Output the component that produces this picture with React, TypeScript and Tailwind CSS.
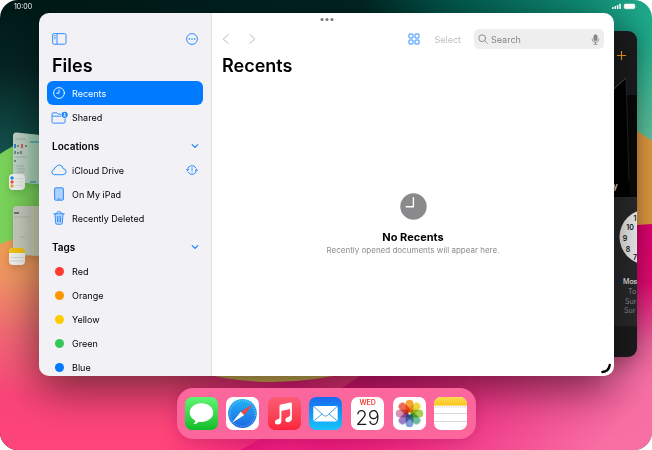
import type { ReactNode } from "react";

const tags = [
  { name: "Red", color: "bg-[#ff3b30]" },
  { name: "Orange", color: "bg-[#ff9500]" },
  { name: "Yellow", color: "bg-[#ffcc00]" },
  { name: "Green", color: "bg-[#34c759]" },
  { name: "Blue", color: "bg-[#007aff]" },
];

const petals = [
  { angle: 0, color: "#f8a23a" },
  { angle: 45, color: "#ecd83a" },
  { angle: 90, color: "#a9cf4f" },
  { angle: 135, color: "#6cbd9b" },
  { angle: 180, color: "#7a9fd8" },
  { angle: 225, color: "#9a7fc4" },
  { angle: 270, color: "#d890b4" },
  { angle: 315, color: "#ee6a52" },
];

function Wallpaper() {
  return (
    <svg className="absolute inset-0 w-full h-full" viewBox="0 0 652 450" preserveAspectRatio="none" aria-hidden="true">
      <defs>
        <linearGradient id="teal" x1="0" y1="0" x2="1" y2="0">
          <stop offset="0" stopColor="#001817" />
          <stop offset="0.55" stopColor="#002522" />
          <stop offset="0.7" stopColor="#025a4e" />
          <stop offset="0.88" stopColor="#0e8b74" />
          <stop offset="1" stopColor="#1fab8b" />
        </linearGradient>
        <linearGradient id="tealDown" x1="0" y1="0" x2="0" y2="1">
          <stop offset="0" stopColor="#1f6f68" stopOpacity="0" />
          <stop offset="0.4" stopColor="#1f6f68" stopOpacity="0.15" />
          <stop offset="1" stopColor="#1f6f68" stopOpacity="0.8" />
        </linearGradient>
        <linearGradient id="mint" x1="0" y1="0" x2="0" y2="1">
          <stop offset="0" stopColor="#66c09b" stopOpacity="0" />
          <stop offset="1" stopColor="#66c09b" />
        </linearGradient>
        <linearGradient id="warm" x1="0" y1="235" x2="0" y2="450" gradientUnits="userSpaceOnUse">
          <stop offset="0" stopColor="#f0a050" />
          <stop offset="0.2" stopColor="#f29664" />
          <stop offset="0.45" stopColor="#f26a74" />
          <stop offset="0.75" stopColor="#fa4579" />
          <stop offset="1" stopColor="#ff4579" />
        </linearGradient>
        <linearGradient id="magenta" x1="360" y1="260" x2="600" y2="450" gradientUnits="userSpaceOnUse">
          <stop offset="0" stopColor="#d5006c" />
          <stop offset="0.5" stopColor="#ee2a80" />
          <stop offset="1" stopColor="#f86fa4" />
        </linearGradient>
        <linearGradient id="magentaRight" x1="0" y1="220" x2="0" y2="400" gradientUnits="userSpaceOnUse">
          <stop offset="0" stopColor="#d8006a" />
          <stop offset="0.35" stopColor="#dc0b70" />
          <stop offset="0.7" stopColor="#e8629a" />
          <stop offset="1" stopColor="#f37aaa" stopOpacity="0" />
        </linearGradient>
        <linearGradient id="bottomGlow" x1="160" y1="0" x2="380" y2="0" gradientUnits="userSpaceOnUse">
          <stop offset="0" stopColor="#ec1c7c" stopOpacity="0" />
          <stop offset="0.6" stopColor="#ec1c7c" />
          <stop offset="1" stopColor="#ec1c7c" stopOpacity="0" />
        </linearGradient>
      </defs>
      <rect width="652" height="450" fill="url(#teal)" />
      <rect width="300" height="170" fill="url(#tealDown)" />
      <rect x="500" y="40" width="152" height="110" fill="url(#mint)" />
      <path d="M0 154Q20 140 60 128V300H0Z" fill="#7bd65c" />
      <path d="M600 110Q630 125 652 141V260H600Z" fill="#dc963e" />
      <path d="M0 244Q30 232 70 222H420V450H0Z" fill="url(#warm)" />
      <path d="M240 450C320 410 450 300 652 224V450Z" fill="url(#magenta)" />
      <path d="M600 228Q630 225 652 224V400H600Z" fill="url(#magentaRight)" />
      <rect x="160" y="376" width="220" height="74" fill="url(#bottomGlow)" />
      <path d="M190 370Q270 394 360 370Z" fill="#d8b858" />
    </svg>
  );
}

function StatusBar() {
  return (
    <header className="h-[13px] pl-[14px] pr-[15px] flex items-center justify-between text-white text-[7px] leading-none relative">
      <span>10:00</span>
      <svg className="w-[25px] h-[7px]" viewBox="0 0 25 7" fill="currentColor" aria-label="Signal and battery">
        <rect x="0" y="4" width="1.6" height="2" rx="0.5" />
        <rect x="2.4" y="3" width="1.6" height="3" rx="0.5" />
        <rect x="4.8" y="2" width="1.6" height="4" rx="0.5" />
        <rect x="7.2" y="0.8" width="1.6" height="5.2" rx="0.5" />
        <rect x="11.7" y="0.6" width="11.6" height="5.6" rx="1.8" opacity="0.5" />
        <rect x="12.2" y="1.1" width="10.6" height="4.6" rx="1.4" />
        <path d="M23.8 2.5Q25 3.4 23.8 4.3Z" opacity="0.6" />
      </svg>
    </header>
  );
}

function ClockWindow() {
  return (
    <aside
      aria-label="Clock"
      className="absolute right-[15px] top-[31px] bottom-[93px] w-[31px] rounded-r-[9px] bg-[#1c1c1e] overflow-hidden shadow-[0_4px_20px_rgba(0,0,0,0.3)] text-white"
    >
      <svg className="w-[41px] h-[326px] max-w-none" viewBox="0 0 41 326" fontFamily="Inter, sans-serif">
        <path d="M11 24.5H20M15.5 20V29" stroke="#ffa21f" strokeWidth="1.2" />
        <rect y="64" width="41" height="102" fill="#090909" />
        <path d="M0 66L20 47L24 166H0Z" fill="#020202" />
        <path d="M5 61Q14 52 20 47" stroke="#6c6c6e" strokeWidth="0.8" fill="none" />
        <path d="M20 47L23 150" stroke="#303032" strokeWidth="0.7" />
        <rect y="166" width="41" height="129" fill="#2a2a2c" />
        <text x="7" y="158" fontSize="8" fontWeight="600" fill="#fff">y</text>
        <circle cx="41" cy="206" r="27.5" fill="#f0f0f0" />
        <g fontSize="7" fontWeight="600" fill="#111" textAnchor="middle">
          <text x="29" y="190">1</text>
          <text x="24" y="199">10</text>
          <text x="19" y="210">9</text>
          <text x="22" y="221">8</text>
          <text x="29" y="229">7</text>
        </g>
        <text x="17" y="253" fontSize="7" fontWeight="500" fill="#f2f2f2">Mos</text>
        <g fontSize="7" fill="#8e8e93">
          <text x="22" y="263">To</text>
          <text x="19" y="273">Sur</text>
          <text x="18" y="282">Sur</text>
        </g>
      </svg>
    </aside>
  );
}

function RecentApps() {
  return (
    <nav aria-label="Recent apps" className="absolute left-[8px] top-[131px] flex flex-col gap-[14px]">
      <button aria-label="Reminders" className="block drop-shadow-md">
        <svg className="w-[40px] h-[60px]" viewBox="0 0 40 60">
          <path d="M5 5Q5 1 9 1.5L40 5V54L8 51Q5 51 5 48Z" fill="#c4d8cc" />
          <path d="M20 3L40 5V54L20 52Z" fill="#b1dcc0" />
          <path d="M7 8H18M7 26H19M8 35H16M9 38H17M9 41H16M7 46H17" stroke="#a3b8ae" strokeWidth="1" />
          <path d="M22 11H31M22 51H28" stroke="#49aabc" strokeWidth="1.4" />
          <path d="M7 13V17" stroke="#2a7fd4" strokeWidth="1.8" />
          <path d="M14 13V17" stroke="#d55a5b" strokeWidth="2" />
          <path d="M7 20V23M13 20V23M10 14V16M10 21V23M18 14V16M7 29V31" stroke="#4b5a57" strokeWidth="1.2" />
          <rect x="1" y="43" width="16" height="16" rx="4" fill="#f7f8f8" />
          <path d="M7 47.5H15M7 51H15M7 54.5H15" stroke="#d9dcdc" strokeWidth="0.6" />
          <circle cx="4" cy="47" r="1.7" fill="#2689e9" />
          <circle cx="4" cy="51" r="1.7" fill="#f2554c" />
          <circle cx="4" cy="55" r="1.7" fill="#f4a43a" />
        </svg>
      </button>
      <button aria-label="Notes" className="block drop-shadow-md">
        <svg className="w-[40px] h-[62px]" viewBox="0 0 40 62">
          <path d="M5 5Q5 1 9 1H40V51L8 50Q5 50 5 47Z" fill="#ccd0c2" />
          <path d="M24 1H40V51L24 50.5Z" fill="#d0d7b9" />
          <path d="M6 8H11" stroke="#444b42" strokeWidth="1.3" />
          <path d="M6 12H22M11 32H17" stroke="#b5bcac" strokeWidth="1.2" />
          <rect x="1" y="43" width="16" height="17" rx="4" fill="#f6f6f4" />
          <path d="M1 48V47Q1 43 5 43H13Q17 43 17 47V48Z" fill="#fac814" />
          <path d="M2 52.5H16M2 56H16" stroke="#d0d0ce" strokeWidth="0.7" />
        </svg>
      </button>
    </nav>
  );
}

function ClockIcon() {
  return (
    <svg className="w-[12px] h-[12px]" viewBox="0 0 12 12" fill="none" stroke="currentColor" strokeWidth="0.9" strokeLinecap="round">
      <circle cx="6" cy="6" r="5.4" />
      <path d="M6 2.8V6.2H3.6" />
    </svg>
  );
}

function SharedIcon() {
  return (
    <svg className="w-[17px] h-[13px]" viewBox="0 0 17 13" fill="none" stroke="#1a83ff" strokeWidth="0.9">
      <path d="M10 3.1H7.2L6 1.8H2.3Q1 1.8 1 3.1V10.8Q1 12.1 2.3 12.1H12.8Q14.1 12.1 14.1 10.8V7.6M1 5.2H10" />
      <circle cx="13.6" cy="3.8" r="3.1" fill="#1a83ff" stroke="none" />
      <circle cx="13.6" cy="2.8" r="0.9" fill="#f2f1f6" stroke="none" />
      <path d="M12.1 5.6Q12.3 4.2 13.6 4.2T15.1 5.6Z" fill="#f2f1f6" stroke="none" />
    </svg>
  );
}

function CloudIcon() {
  return (
    <svg className="w-[16px] h-[12px]" viewBox="0 0 16 12" fill="none" stroke="#1a83ff" strokeWidth="0.9" strokeLinejoin="round">
      <path d="M3.8 10.7Q0.9 10.5 0.9 8.1Q0.9 5.9 3.2 5.4Q3 3.4 4.9 3.2Q6 0.9 8.4 1Q11.4 1.2 12 4.5Q15.1 4.9 15.1 7.6Q15.1 10.5 12 10.7Z" />
    </svg>
  );
}

function IpadIcon() {
  return (
    <svg className="w-[10px] h-[14px]" viewBox="0 0 10 14" fill="#aed2fb" stroke="#1a83ff" strokeWidth="0.9">
      <rect x="0.6" y="0.8" width="8.8" height="12.4" rx="1.2" />
      <path d="M3.6 11.9H6.4" strokeWidth="0.7" />
    </svg>
  );
}

function TrashIcon() {
  return (
    <svg className="w-[12px] h-[14px]" viewBox="0 0 12 14" fill="none" stroke="#1a83ff" strokeWidth="0.9" strokeLinecap="round" strokeLinejoin="round">
      <path d="M2 2.9L2.7 12Q2.8 13.2 3.9 13.2H8.1Q9.2 13.2 9.3 12L10 2.9" fill="#d5e6fb" />
      <path d="M0.8 2.8H11.2M4 2.6V1.6Q4 0.8 4.8 0.8H7.2Q8 0.8 8 1.6V2.6M4.2 5L4.5 11M6 5V11M7.8 5L7.5 11" />
    </svg>
  );
}

function SyncAlertIcon() {
  return (
    <svg className="w-[12px] h-[12px]" viewBox="0 0 12 12" fill="none" stroke="#1a83ff" strokeWidth="0.9" strokeLinecap="round" strokeLinejoin="round">
      <path d="M1.5 6.4A4.5 4.5 0 0 1 10 4M10.5 5.6A4.5 4.5 0 0 1 2 8" />
      <path d="M0.4 5.5L1.5 6.7L2.7 5.5M9.3 6.5L10.5 5.3L11.6 6.5M6 3.7V6.5M6 8.1V8.2" />
    </svg>
  );
}

type RowProps = {
  icon: ReactNode;
  label: string;
  active?: boolean;
  trailing?: ReactNode;
};

function Row({ icon, label, active, trailing }: RowProps) {
  return (
    <li>
      <a
        href="#"
        className={
          active
            ? "h-[24px] pl-[3px] pr-[5px] flex items-center gap-1 rounded-[6px] bg-[#007aff] text-white"
            : "h-[24px] pl-[3px] pr-[5px] flex items-center gap-1 rounded-[6px] text-black"
        }
      >
        <span className="w-[18px] flex justify-center">{icon}</span>
        <span className="flex-1">{label}</span>
        {trailing}
      </a>
    </li>
  );
}

function SectionHeader({ title }: { title: string }) {
  return (
    <h2>
      <button
        aria-expanded="true"
        className="w-full h-[24px] pl-[5px] pr-1 flex items-center justify-between text-[10px] leading-none font-semibold"
      >
        {title}
        <svg className="w-[8px] h-[8px]" viewBox="0 0 8 8" fill="none" stroke="#1a83ff" strokeWidth="1.2" strokeLinecap="round" strokeLinejoin="round">
          <path d="M1.2 2.6L4 5.4L6.8 2.6" />
        </svg>
      </button>
    </h2>
  );
}

function Sidebar() {
  return (
    <aside className="w-[173px] shrink-0 px-2 pt-4 bg-[#f2f1f6] border-r border-[#e3e2e7] overflow-hidden text-[9px] leading-none">
      <div className="h-[20px] px-[5px] flex items-center justify-between text-[#1a83ff]">
        <button aria-label="Toggle sidebar">
          <svg className="w-[15px] h-[12px]" viewBox="0 0 15 12" fill="none" stroke="currentColor" strokeWidth="0.9">
            <rect x="0.6" y="0.6" width="13.4" height="10.6" rx="1.4" />
            <path d="M5 0.6V11.2" />
            <path d="M1.9 2.6H3.7M1.9 4.2H3.7M1.9 5.8H3.7" strokeWidth="0.7" />
          </svg>
        </button>
        <button aria-label="More">
          <svg className="w-[12px] h-[12px]" viewBox="0 0 12 12" fill="none" stroke="currentColor" strokeWidth="0.9">
            <circle cx="6" cy="6" r="5.4" />
            <path d="M3.4 6H3.41M6 6H6.01M8.6 6H8.61" strokeWidth="1.6" strokeLinecap="round" />
          </svg>
        </button>
      </div>
      <h1 className="h-[32px] pt-[2px] pl-[5px] flex items-center text-[18px] leading-none font-semibold">Files</h1>

      <ul>
        <Row icon={<ClockIcon />} label="Recents" active />
        <Row icon={<SharedIcon />} label="Shared" />
      </ul>

      <section className="mt-[5px]">
        <SectionHeader title="Locations" />
        <ul>
          <Row icon={<CloudIcon />} label="iCloud Drive" trailing={<SyncAlertIcon />} />
          <Row icon={<IpadIcon />} label="On My iPad" />
          <Row icon={<TrashIcon />} label="Recently Deleted" />
        </ul>
      </section>

      <section className="mt-[5px]">
        <SectionHeader title="Tags" />
        <ul>
          {tags.map((tag) => (
            <Row key={tag.name} icon={<span className={`w-[9px] h-[9px] rounded-full ${tag.color}`} />} label={tag.name} />
          ))}
        </ul>
      </section>
    </aside>
  );
}

function Content() {
  return (
    <section className="flex-1 min-w-0 flex flex-col px-[10px] pt-4 bg-white">
      <div className="h-[20px] flex items-center text-[9px] leading-none">
        <div className="flex items-center gap-[18px] text-[#b9b9bb]">
          <button aria-label="Back">
            <svg className="w-[8px] h-[10px]" viewBox="0 0 8 10" fill="none" stroke="currentColor" strokeWidth="1" strokeLinecap="round" strokeLinejoin="round">
              <path d="M6.2 0.6L1.2 5L6.2 9.4" />
            </svg>
          </button>
          <button aria-label="Forward">
            <svg className="w-[8px] h-[10px]" viewBox="0 0 8 10" fill="none" stroke="currentColor" strokeWidth="1" strokeLinecap="round" strokeLinejoin="round">
              <path d="M1.8 0.6L6.8 5L1.8 9.4" />
            </svg>
          </button>
        </div>
        <button aria-label="View options" className="ml-auto">
          <svg className="w-[12px] h-[12px]" viewBox="0 0 12 12" fill="none" stroke="#1a83ff" strokeWidth="0.9">
            <rect x="1" y="1" width="4" height="4" rx="0.4" />
            <rect x="7" y="1" width="4" height="4" rx="0.4" />
            <rect x="1" y="7" width="4" height="4" rx="0.4" />
            <rect x="7" y="7" width="4" height="4" rx="0.4" />
          </svg>
        </button>
        <button className="ml-[14px] mr-[13px] text-[#bdbdbf]">Select</button>
        <div className="w-[130px] h-[20px] px-1 flex items-center gap-[3px] rounded-[5px] bg-[#eeeeef] text-[#85858a]">
          <svg className="w-[10px] h-[10px] shrink-0" viewBox="0 0 10 10" fill="none" stroke="currentColor" strokeWidth="0.9" strokeLinecap="round">
            <circle cx="4.2" cy="4.2" r="3.4" />
            <path d="M6.7 6.7L9.3 9.3" />
          </svg>
          <input
            type="text"
            aria-label="Search"
            placeholder="Search"
            className="flex-1 min-w-0 h-full bg-transparent outline-none placeholder:text-[#85858a]"
          />
          <button aria-label="Dictate">
            <svg className="w-[9px] h-[11px]" viewBox="0 0 9 11" fill="none" stroke="currentColor" strokeWidth="0.8" strokeLinecap="round">
              <rect x="2.9" y="0.8" width="3.2" height="6" rx="1.6" fill="currentColor" />
              <path d="M1.3 5V5.6Q1.5 8.4 4.5 8.4T7.7 5.6V5M4.5 8.4V10.2M2.9 10.3H6.1" />
            </svg>
          </button>
        </div>
      </div>
      <h2 className="h-[32px] pt-[2px] flex items-center text-[18px] leading-none font-semibold">Recents</h2>

      <div className="flex-1 pb-[8px] flex flex-col items-center justify-center">
        <svg className="w-[27px] h-[27px]" viewBox="0 0 27 27" fill="none">
          <circle cx="13.5" cy="13.5" r="13.2" fill="#8a8a8d" />
          <path d="M13.4 4.8V13.7H6.2" stroke="#fff" strokeWidth="1.4" strokeLinecap="round" strokeLinejoin="round" />
        </svg>
        <h3 className="mt-[10px] text-[11px] leading-[14px] font-bold">No Recents</h3>
        <p className="text-[8px] leading-[12px] text-[#8c8c90]">Recently opened documents will appear here.</p>
      </div>
    </section>
  );
}

function FilesWindow() {
  return (
    <main className="flex-1 min-h-0 ml-[39px] mr-[38px] relative flex rounded-[10px] overflow-hidden shadow-[0_12px_44px_rgba(0,0,0,0.55)]">
      <Sidebar />
      <Content />
      <button aria-label="Multitasking" className="absolute top-1 left-1/2 -translate-x-1/2 flex gap-[2px] py-px">
        <span className="w-[3px] h-[3px] rounded-full bg-[#77777a]" />
        <span className="w-[3px] h-[3px] rounded-full bg-[#77777a]" />
        <span className="w-[3px] h-[3px] rounded-full bg-[#77777a]" />
      </button>
      <svg className="absolute right-[2px] bottom-[2px] w-[11px] h-[11px]" viewBox="0 0 11 11" fill="none" aria-hidden="true">
        <path d="M1.4 9Q7.6 8.7 8.8 2" stroke="#000" strokeWidth="2.4" strokeLinecap="round" />
      </svg>
    </main>
  );
}

function DockIcon({ label, className, children }: { label: string; className: string; children: ReactNode }) {
  return (
    <button aria-label={label} className={`w-[33px] h-[33px] rounded-[7px] overflow-hidden ${className}`}>
      {children}
    </button>
  );
}

function Dock() {
  return (
    <footer className="mt-[12px] mb-[11px] mx-auto w-[299px] h-[51px] px-2 relative flex items-center justify-between rounded-[16px] bg-[#fb669c] shadow-[0_2px_14px_rgba(90,0,50,0.2)]">
      <DockIcon label="Messages" className="bg-linear-to-b from-[#5ff573] to-[#08bd26]">
        <svg viewBox="0 0 33 33" fill="#fff">
          <path d="M16.5 6.3C9.9 6.3 4.7 10.4 4.7 15.6C4.7 19 6.9 22 10.3 23.6C10.3 25 9.6 26.2 8.5 27.1C10.7 27 12.5 26 13.7 24.7C21.8 26 28.3 21.5 28.3 15.6C28.3 10.4 23.1 6.3 16.5 6.3Z" />
        </svg>
      </DockIcon>
      <DockIcon label="Safari" className="bg-white">
        <svg viewBox="0 0 33 33">
          <defs>
            <linearGradient id="safari" x1="0" y1="0" x2="0" y2="1">
              <stop offset="0" stopColor="#22b3f5" />
              <stop offset="1" stopColor="#1b65e0" />
            </linearGradient>
          </defs>
          <circle cx="16.5" cy="16.5" r="14.4" fill="url(#safari)" />
          <circle cx="16.5" cy="16.5" r="12.7" fill="none" stroke="#b9e0ff" strokeWidth="1.4" strokeDasharray="0.4 1.6" />
          <path d="M27 7.3L14.9 14.8L18.1 18.2Z" fill="#f2453d" />
          <path d="M6 25.7L14.9 14.8L18.1 18.2Z" fill="#fff" />
        </svg>
      </DockIcon>
      <DockIcon label="Music" className="bg-linear-to-b from-[#fb5c74] to-[#fa233b]">
        <svg viewBox="0 0 33 33" fill="#fff">
          <path
            fillRule="evenodd"
            d="M11.5 9.2Q11.5 7.9 12.8 7.6L22.5 5.6Q23.9 5.3 23.9 6.7V21.3Q23.9 24.6 20.3 25.2Q17.3 25.4 17.3 22.7Q17.3 20.5 20 19.9Q22 19.6 22.1 18.3V12.1L13.4 13.9V23.7Q13.4 27 9.9 27.6Q6.9 27.8 6.9 25.1Q6.9 22.9 9.5 22.3Q11.5 22 11.5 20.7Z"
          />
        </svg>
      </DockIcon>
      <DockIcon label="Mail" className="bg-linear-to-b from-[#1c68ef] to-[#1cc4fb]">
        <svg viewBox="0 0 33 33" fill="none" stroke="#2b95f2" strokeWidth="0.9">
          <rect x="4.3" y="9" width="24.4" height="15.4" rx="1.6" fill="#fff" stroke="none" />
          <path d="M4.8 9.5L14.7 18.5Q16.5 19.9 18.3 18.5L28.2 9.5M4.8 23.9L13 17M28.2 23.9L20 17" />
        </svg>
      </DockIcon>
      <DockIcon label="Calendar" className="bg-white flex flex-col items-center justify-end">
        <span className="text-[7px] leading-[8px] font-semibold text-[#f43f38]">WED</span>
        <span className="text-[20px] leading-[23px] font-light text-[#1a1a1a]">29</span>
      </DockIcon>
      <DockIcon label="Photos" className="bg-white">
        <svg viewBox="0 0 33 33">
          {petals.map((petal) => (
            <rect
              key={petal.angle}
              x="12.6"
              y="2.8"
              width="7.8"
              height="12.8"
              rx="3.9"
              fill={petal.color}
              className="mix-blend-multiply"
              transform={`rotate(${petal.angle} 16.5 16.5)`}
            />
          ))}
        </svg>
      </DockIcon>
      <DockIcon label="Notes" className="bg-white">
        <svg viewBox="0 0 33 33" fill="none">
          <defs>
            <linearGradient id="notes" x1="0" y1="0" x2="0" y2="1">
              <stop offset="0" stopColor="#fddc50" />
              <stop offset="1" stopColor="#fac51c" />
            </linearGradient>
          </defs>
          <rect width="33" height="8.6" fill="url(#notes)" />
          <path d="M1 10H32" stroke="#a9a9a9" strokeWidth="0.8" strokeDasharray="0.8 1" />
          <path d="M0 16.5H33M0 24.5H33" stroke="#cfcfcf" strokeWidth="0.8" />
        </svg>
      </DockIcon>
    </footer>
  );
}

function App() {
  return (
    <div className="h-screen relative flex flex-col rounded-[18px] overflow-hidden font-[Inter,sans-serif] text-black">
      <Wallpaper />
      <ClockWindow />
      <RecentApps />
      <StatusBar />
      <FilesWindow />
      <Dock />
    </div>
  );
}

export default App;
